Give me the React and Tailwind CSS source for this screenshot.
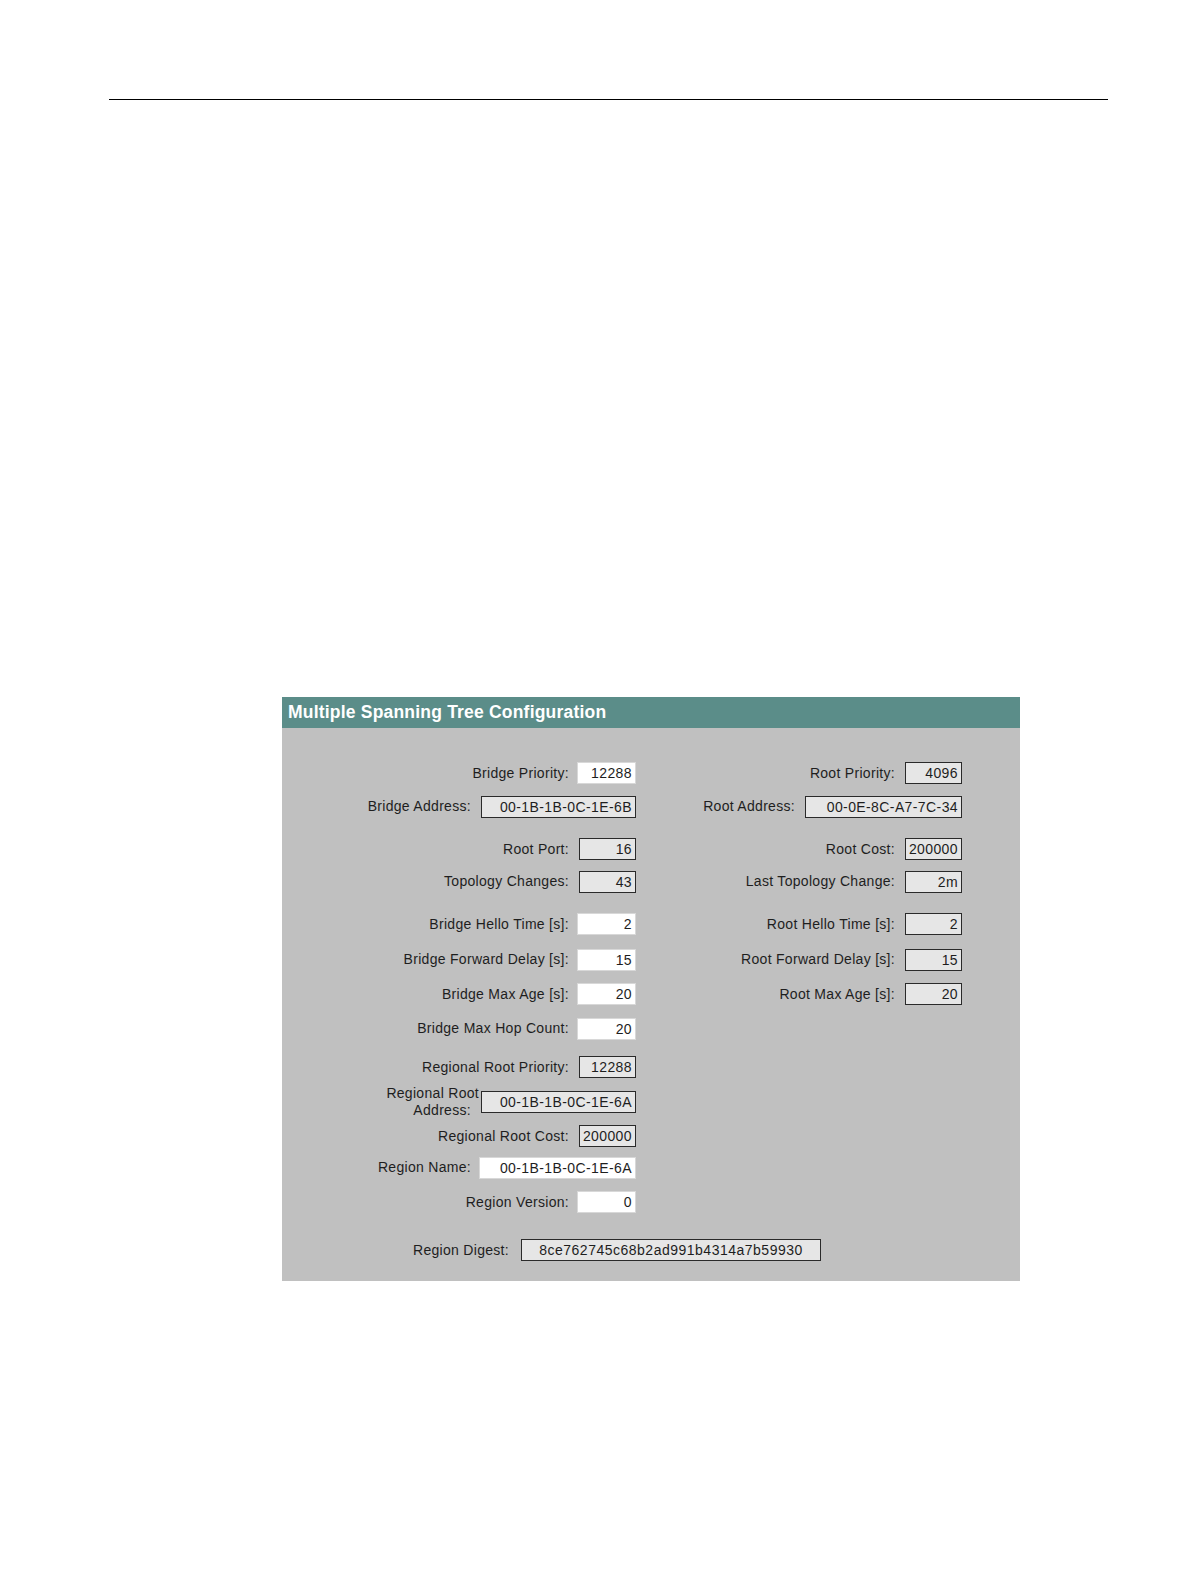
import React from "react";

const F = { fontFamily: '"Liberation Sans", Arial, sans-serif' };

function Box({ value, w, kind }) {
  const cls =
    kind === "white"
      ? "bg-white border border-[#d8d8d8]"
      : "bg-[#e6e6e6] border border-[#2a2a2a]";
  return (
    <div
      className={`${cls} h-[22px] flex items-center justify-end pr-[3px] text-[14px] tracking-[0.4px] text-[#1e1e1e] leading-none shrink-0 whitespace-nowrap`}
      style={{ width: w }}
    >
      {value}
    </div>
  );
}

function Field({ label, value, w, kind, gap = 8 }) {
  return (
    <div className="flex items-center justify-end" style={{ gap }}>
      <span className="text-[14px] tracking-[0.3px] text-[#1e1e1e] whitespace-nowrap">{label}</span>
      <Box value={value} w={w} kind={kind} />
    </div>
  );
}

function Row({ mt, left, right }) {
  return (
    <div className="flex h-[22px]" style={{ marginTop: mt }}>
      <div className="w-[354px] flex justify-end">{left}</div>
      <div className="w-[326px] flex justify-end">{right}</div>
    </div>
  );
}

export default function App() {
  return (
    <div className="w-full h-screen overflow-hidden bg-white" style={F}>
      <div className="pt-[99px] pl-[109px]">
        <div className="w-[999px] h-px bg-black"></div>
      </div>
      <div className="ml-[282px] mt-[597px] w-[738px] bg-[#c0c0c0]">
        <div className="h-[31px] bg-[#5b8d89] flex items-center pl-[6px]">
          <span className="text-white font-bold text-[17.5px] tracking-[0.2px]">
            Multiple Spanning Tree Configuration
          </span>
        </div>
        <div className="pt-[34px] pb-[20px]">
          <Row
            mt={0}
            left={<Field label="Bridge Priority:" value="12288" w={59} kind="white" />}
            right={<Field label="Root Priority:" value="4096" w={57} kind="ro" gap={10} />}
          />
          <Row
            mt={11.5}
            left={<Field label="Bridge Address:" value="00-1B-1B-0C-1E-6B" w={155} kind="ro" gap={10} />}
            right={<Field label="Root Address:" value="00-0E-8C-A7-7C-34" w={157} kind="ro" gap={10} />}
          />
          <Row
            mt={20.5}
            left={<Field label="Root Port:" value="16" w={57} kind="ro" gap={10} />}
            right={<Field label="Root Cost:" value="200000" w={57} kind="ro" gap={10} />}
          />
          <Row
            mt={10.5}
            left={<Field label="Topology Changes:" value="43" w={57} kind="ro" gap={10} />}
            right={<Field label="Last Topology Change:" value="2m" w={57} kind="ro" gap={10} />}
          />
          <Row
            mt={20.5}
            left={<Field label="Bridge Hello Time [s]:" value="2" w={59} kind="white" />}
            right={<Field label="Root Hello Time [s]:" value="2" w={57} kind="ro" gap={10} />}
          />
          <Row
            mt={13.5}
            left={<Field label="Bridge Forward Delay [s]:" value="15" w={59} kind="white" />}
            right={<Field label="Root Forward Delay [s]:" value="15" w={57} kind="ro" gap={10} />}
          />
          <Row
            mt={12.5}
            left={<Field label="Bridge Max Age [s]:" value="20" w={59} kind="white" />}
            right={<Field label="Root Max Age [s]:" value="20" w={57} kind="ro" gap={10} />}
          />
          <Row
            mt={12.5}
            left={<Field label="Bridge Max Hop Count:" value="20" w={59} kind="white" />}
          />
          <Row
            mt={16.5}
            left={<Field label="Regional Root Priority:" value="12288" w={57} kind="ro" gap={10} />}
          />
          <Row
            mt={12.5}
            left={
              <div className="flex items-center justify-end gap-[2px]">
                <span className="text-[14px] tracking-[0.3px] text-[#1e1e1e] leading-[17px] text-right whitespace-nowrap">
                  Regional Root
                  <br />
                  <span className="pr-[8px]">Address:</span>
                </span>
                <Box value="00-1B-1B-0C-1E-6A" w={155} kind="ro" />
              </div>
            }
          />
          <Row
            mt={12.5}
            left={<Field label="Regional Root Cost:" value="200000" w={57} kind="ro" gap={10} />}
          />
          <Row
            mt={9.5}
            left={<Field label="Region Name:" value="00-1B-1B-0C-1E-6A" w={157} kind="white" />}
          />
          <Row
            mt={12.5}
            left={<Field label="Region Version:" value="0" w={59} kind="white" />}
          />
          <div className="flex h-[22px] mt-[26px]">
            <div className="w-[227px] flex justify-end items-center">
              <span className="text-[14px] tracking-[0.3px] text-[#1e1e1e]">Region Digest:</span>
            </div>
            <div className="ml-[12px] w-[300px] h-[22px] bg-[#e6e6e6] border border-[#2a2a2a] flex items-center justify-center text-[14px] tracking-[0.5px] text-[#1e1e1e]">
              8ce762745c68b2ad991b4314a7b59930
            </div>
          </div>
        </div>
      </div>
    </div>
  );
}
